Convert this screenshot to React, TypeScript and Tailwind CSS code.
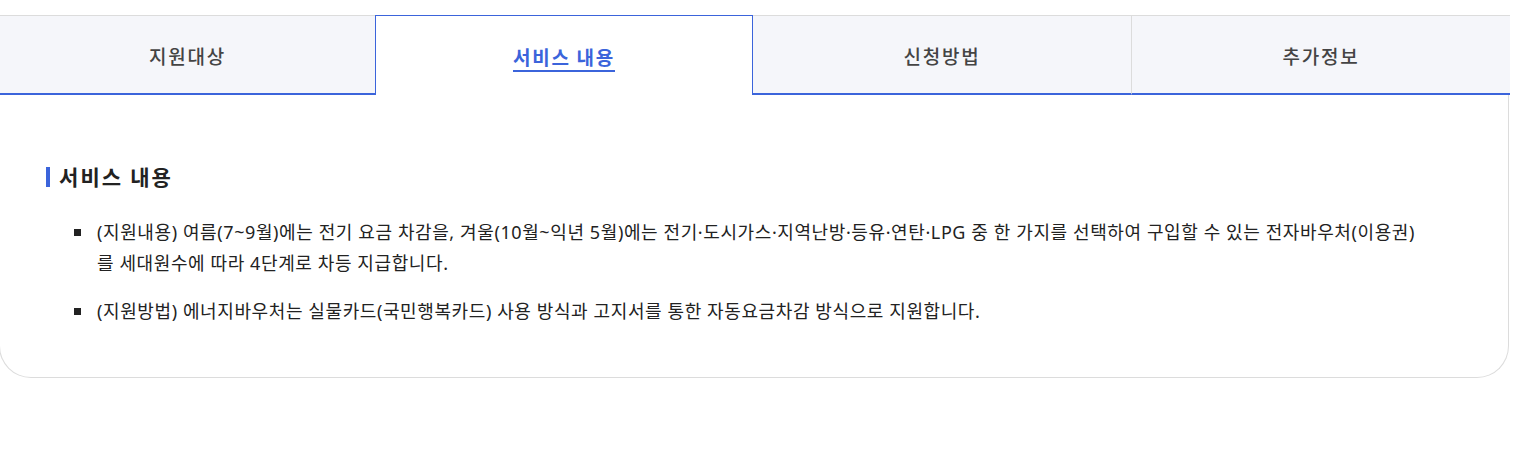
import React from "react";

const tabs = [
  { label: "지원대상", w: "w-[375px]" },
  { label: "서비스 내용", w: "w-[378px]" },
  { label: "신청방법", w: "w-[378px]" },
  { label: "추가정보", w: "w-[379px]" },
];

const items = [
  "(지원내용) 여름(7~9월)에는 전기 요금 차감을, 겨울(10월~익년 5월)에는 전기·도시가스·지역난방·등유·연탄·LPG 중 한 가지를 선택하여 구입할 수 있는 전자바우처(이용권)를 세대원수에 따라 4단계로 차등 지급합니다.",
  "(지원방법) 에너지바우처는 실물카드(국민행복카드) 사용 방식과 고지서를 통한 자동요금차감 방식으로 지원합니다.",
];

export default function App() {
  const active = 1;

  return (
    <div
      className="bg-white min-h-[449px] pt-[15px]"
      style={{ fontFamily: '"Noto Sans CJK KR", "Noto Sans", sans-serif' }}
    >
      <div className="ml-[-1px] w-[1510px] border border-t-0 border-[#dcdcdc] rounded-b-[32px] bg-white">
        <div className="flex h-[80px]">
          {tabs.map((t, i) =>
            i === active ? (
              <div
                key={t.label}
                className={`${t.w} shrink-0 flex items-center justify-center pt-[4px] bg-white border border-b-0 border-[#3b64db] text-[19px] tracking-[0.09em] font-bold text-[#3b64db] underline underline-offset-[5px] decoration-[2px]`}
              >
                {t.label}
              </div>
            ) : (
              <div
                key={t.label}
                className={`${t.w} shrink-0 flex items-center justify-center pt-[3px] bg-[#f5f6fa] border-t border-[#dcdcdc] border-b-2 border-b-[#3b64db] text-[19px] tracking-[0.09em] font-medium text-[#444] ${
                  i === 3 ? "border-l" : ""
                }`}
              >
                {t.label}
              </div>
            )
          )}
        </div>

        <div className="pl-[46px] pr-[80px] pt-[71px] pb-[50px]">
          <h3 className="flex items-center gap-[9px] text-[21px] tracking-[0.1em] font-bold text-[#222] leading-none">
            <span className="w-[4px] h-[20px] bg-[#3b64db]" />
            서비스 내용
          </h3>
          <ul className="mt-[30px] pl-[28px] space-y-[17px] font-['Noto_Sans','Noto_Sans_CJK_KR',sans-serif]">
            {items.map((it) => (
              <li key={it} className="flex gap-[16px] text-[18px] tracking-[0.6px] leading-[31px] text-[#222]">
                <span className="mt-[12px] w-[7px] h-[7px] bg-[#222] shrink-0" />
                <span>{it}</span>
              </li>
            ))}
          </ul>
        </div>
      </div>
    </div>
  );
}
